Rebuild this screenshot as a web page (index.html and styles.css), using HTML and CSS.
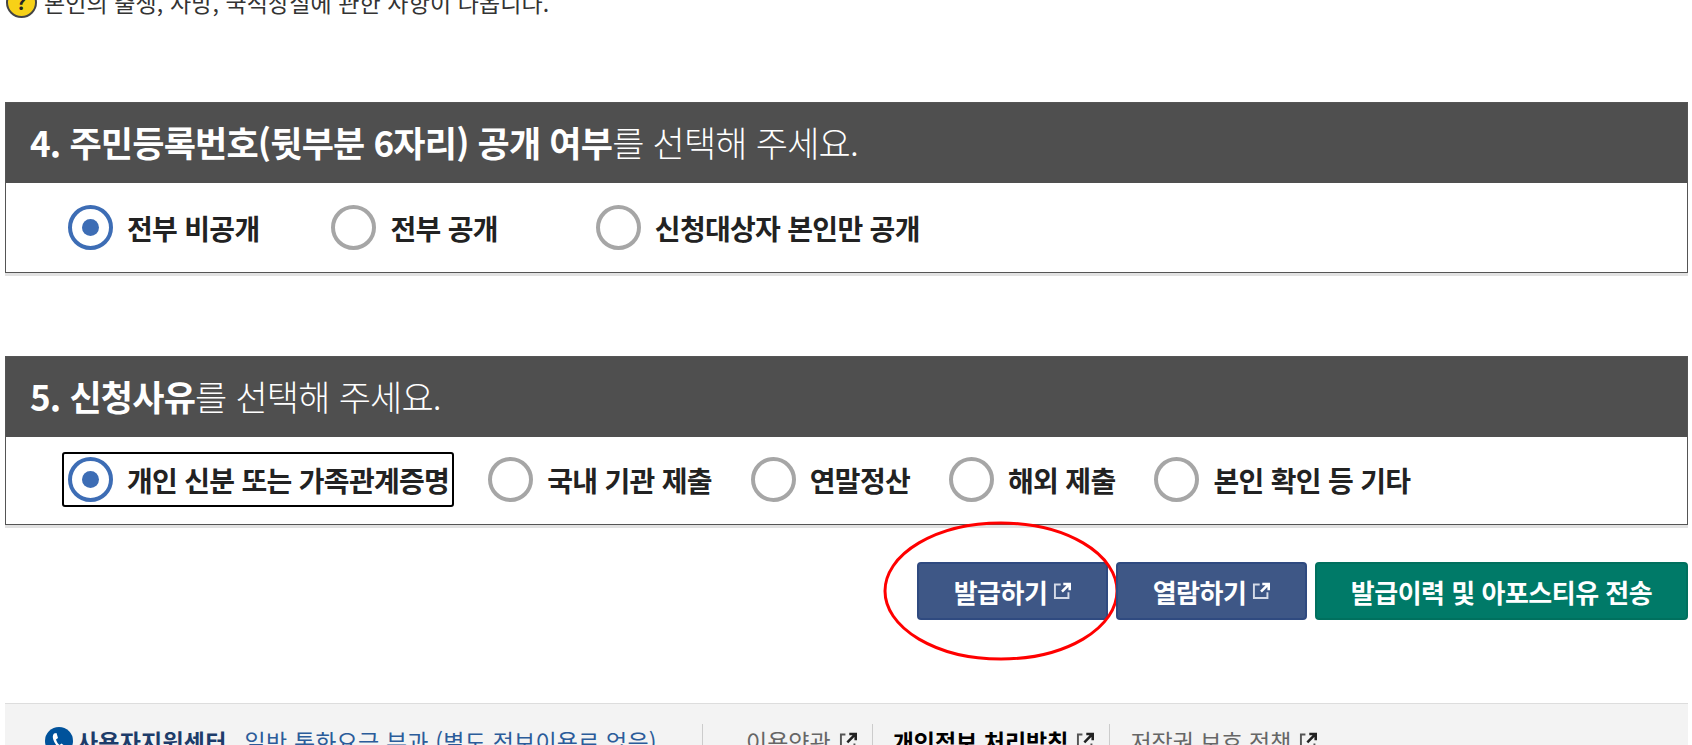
FILE: index.html
```html
<!DOCTYPE html>
<html lang="ko">

<head>
    <meta charset="UTF-8">
    <meta name="viewport" content="width=device-width, initial-scale=1.0">
    <title>발급하기</title>
    <link rel="stylesheet" href="styles.css">
</head>

<body>
    <div class="notice">
        <span class="notice-icon">?</span>
        <span>본인의 출생, 사망, 국적상실에 관한 사항이 나옵니다.</span>
    </div>

    <!-- 4. 공개 여부 -->
    <section class="panel panel-first">
        <h2 class="panel-title"><strong>4. 주민등록번호(뒷부분 6자리) 공개 여부</strong>를 선택해 주세요.</h2>
        <div class="options">
            <label class="option option-a"><span class="radio checked"></span>전부 비공개</label>
            <label class="option option-b"><span class="radio"></span>전부 공개</label>
            <label class="option"><span class="radio"></span>신청대상자 본인만 공개</label>
        </div>
    </section>

    <!-- 5. 신청사유 -->
    <section class="panel panel-second">
        <h2 class="panel-title"><strong>5. 신청사유</strong>를 선택해 주세요.</h2>
        <div class="options options-tight">
            <label class="option focused"><span class="radio checked"></span>개인 신분 또는 가족관계증명</label>
            <label class="option"><span class="radio"></span>국내 기관 제출</label>
            <label class="option"><span class="radio"></span>연말정산</label>
            <label class="option"><span class="radio"></span>해외 제출</label>
            <label class="option"><span class="radio"></span>본인 확인 등 기타</label>
        </div>
    </section>

    <div class="actions">
        <a class="btn btn-blue" href="#">발급하기
            <svg class="ext" viewBox="0 0 14 14"><path d="M6 2H1.500v10.500H12V8" fill="none" stroke="#d5dbe8" stroke-width="1.500"/><path d="M7 7.500 12 2.500M8 1.500h5v5" fill="none" stroke="#fff" stroke-width="2"/></svg>
            <svg class="circle-mark" viewBox="0 0 236 140"><ellipse cx="118" cy="70" rx="116" ry="68" fill="none" stroke="#f00" stroke-width="3"/></svg>
        </a>
        <a class="btn btn-blue" href="#">열람하기
            <svg class="ext" viewBox="0 0 14 14"><path d="M6 2H1.500v10.500H12V8" fill="none" stroke="#d5dbe8" stroke-width="1.500"/><path d="M7 7.500 12 2.500M8 1.500h5v5" fill="none" stroke="#fff" stroke-width="2"/></svg>
        </a>
        <a class="btn btn-green" href="#">발급이력 및 아포스티유 전송</a>
    </div>

    <footer class="footer">
        <div class="support">
            <svg class="phone" viewBox="0 0 28 28"><circle cx="14" cy="14" r="14" fill="#00529b"/><path d="M9 6.500c-2 2-1.500 6 1.500 10.500s6.500 6 9 5l1-2.500-4-3-2 1.500c-1.500-1-3-3.500-3.500-5.500l2-1.500-1.500-5z" fill="#fff"/></svg>
            <strong>사용자지원센터</strong>
            <span class="support-note">일반 통화요금 부과 (별도 정보이용료 없음)</span>
        </div>
        <ul class="foot-links">
            <li><a href="#">이용약관<svg class="ext-dark" viewBox="0 0 14 14"><path d="M5 2H1.500v11H12V9" fill="none" stroke="#555" stroke-width="1.500"/><path d="M6.500 8 12 2.500M8 1.500h5v5" fill="none" stroke="#222" stroke-width="2"/></svg></a></li>
            <li><a class="foot-bold" href="#">개인정보 처리방침<svg class="ext-dark" viewBox="0 0 14 14"><path d="M5 2H1.500v11H12V9" fill="none" stroke="#555" stroke-width="1.500"/><path d="M6.500 8 12 2.500M8 1.500h5v5" fill="none" stroke="#222" stroke-width="2"/></svg></a></li>
            <li><a href="#">저작권 보호 정책<svg class="ext-dark" viewBox="0 0 14 14"><path d="M5 2H1.500v11H12V9" fill="none" stroke="#555" stroke-width="1.500"/><path d="M6.500 8 12 2.500M8 1.500h5v5" fill="none" stroke="#222" stroke-width="2"/></svg></a></li>
        </ul>
    </footer>
</body>

</html>
```

FILE: styles.css
```css
html,
body {
    height: 745px;
    overflow: hidden;
}

body {
    margin: 0;
    padding: 0 4px 0 5px;
    background: #fff;
    color: #222;
    font-family: "Noto Sans CJK KR", "Noto Sans", sans-serif;
}

.notice {
    display: flex;
    align-items: center;
    gap: 7px;
    margin-top: -13px;
    padding-left: 1px;
    height: 30px;
    font-size: 23px;
    letter-spacing: 0.1px;
    color: #333;
}

.notice-icon {
    width: 31px;
    height: 31px;
    box-sizing: border-box;
    border: 2px solid #444;
    border-radius: 50%;
    background: #f7d117;
    font-size: 20px;
    font-weight: 700;
    line-height: 26px;
    text-align: center;
    color: #222;
}

.panel {
    border: 1px solid #555;
    box-shadow: 0 3px 0 #e2e2e2;
}

.panel-first {
    margin-top: 85px;
}

.panel-second {
    margin-top: 83px;
}

.panel-title {
    margin: 0;
    height: 80px;
    padding-left: 24px;
    background: #4f4f4f;
    color: #fff;
    font-size: 35px;
    font-weight: 300;
    line-height: 78px;
    letter-spacing: -0.8px;
}

.panel-title strong {
    font-weight: 700;
}

.options {
    display: flex;
    align-items: center;
    height: 89px;
    padding-left: 62px;
}

.options-tight {
    height: 85px;
    padding-bottom: 2px;
    padding-left: 56px;
    gap: 39px;
}

.option {
    display: flex;
    align-items: center;
    gap: 14px;
    font-size: 28px;
    font-weight: 700;
    color: #222;
    letter-spacing: -0.7px;
}

.option-a {
    margin-right: 72px;
}

.option-b {
    margin-right: 98px;
}

.focused {
    box-sizing: border-box;
    height: 55px;
    margin-right: -5px;
    padding: 0 3px 0 4px;
    border: 2px solid #000;
    border-radius: 3px;
}

.radio {
    display: flex;
    align-items: center;
    justify-content: center;
    box-sizing: border-box;
    width: 45px;
    height: 45px;
    border: 4px solid #a6a6a6;
    border-radius: 50%;
    background: #fff;
}

.radio.checked {
    border-color: #3d6db5;
}

.radio.checked::after {
    content: "";
    width: 17px;
    height: 17px;
    border-radius: 50%;
    background: #3d6db5;
}

.actions {
    display: flex;
    justify-content: flex-end;
    gap: 8px;
    margin-top: 37px;
}

.btn {
    position: relative;
    display: flex;
    align-items: center;
    justify-content: center;
    gap: 6px;
    box-sizing: border-box;
    height: 58px;
    border: 2px solid #2f4a80;
    border-radius: 4px;
    color: #fff;
    font-size: 26px;
    font-weight: 700;
    letter-spacing: -0.5px;
    text-decoration: none;
}

.btn-blue {
    width: 191px;
    background: #3e5786;
}

.btn-green {
    width: 373px;
    border-color: #00705e;
    background: #007a68;
}

.ext {
    width: 18px;
    height: 18px;
}

.circle-mark {
    position: absolute;
    left: -36px;
    top: -43px;
    width: 236px;
    height: 140px;
    pointer-events: none;
}

.footer {
    display: flex;
    align-items: flex-start;
    margin-top: 83px;
    height: 60px;
    padding-top: 20px;
    box-sizing: border-box;
    border-top: 1px solid #ddd;
    background: #f3f3f3;
    font-size: 23px;
}

.support {
    display: flex;
    align-items: center;
    gap: 4px;
    width: 697px;
    padding-left: 40px;
    box-sizing: border-box;
    color: #1d3c6a;
    letter-spacing: 0.2px;
}

.phone {
    width: 28px;
    height: 28px;
}

.support-note {
    margin-left: 14px;
    font-weight: 400;
    color: #2b5c9a;
}

.foot-links {
    display: flex;
    margin: 0;
    padding: 0;
    list-style: none;
}

.foot-links li {
    padding: 0 15px 0 20px;
    border-left: 1px solid #ccc;
}

.foot-links li:first-child {
    padding-left: 43px;
}

.foot-links a {
    display: flex;
    align-items: center;
    gap: 8px;
    color: #666;
    text-decoration: none;
}

.foot-links .foot-bold {
    color: #000;
    font-weight: 700;
}

.ext-dark {
    width: 18px;
    height: 18px;
}
```
